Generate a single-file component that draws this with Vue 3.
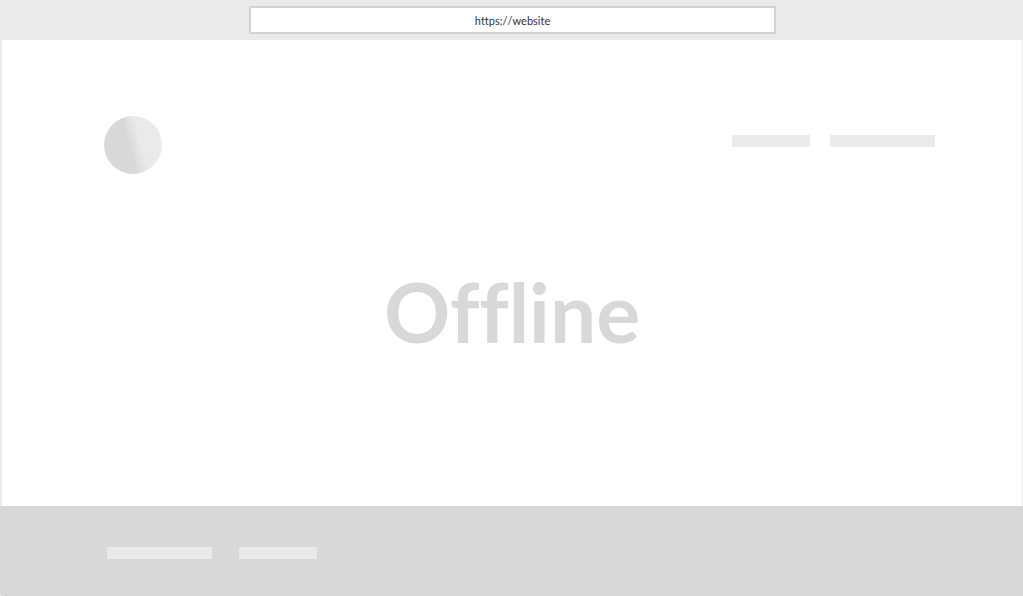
<script setup>
import { ref } from 'vue'

const address = ref('https://website')
</script>

<template>
  <div class="browser">
    <header class="toolbar">
      <input v-model="address" class="address" type="text" aria-label="Address" spellcheck="false" />
    </header>
    <main class="page">
      <div class="top">
        <div class="logo"></div>
        <div class="nav">
          <span class="bar short"></span>
          <span class="bar long"></span>
        </div>
      </div>
      <h1 class="status">Offline</h1>
    </main>
    <footer class="footer">
      <span class="bar long"></span>
      <span class="bar short"></span>
    </footer>
  </div>
</template>

<style>
body {
  margin: 0;
  background: #fff;
}
</style>

<style scoped>
.browser {
  box-sizing: border-box;
  min-height: 100vh;
  display: flex;
  flex-direction: column;
  overflow: hidden;
  border-radius: 2px 0 0 2px;
  background: #fff;
  font-family: Lato, "Liberation Sans", sans-serif;
  font-variant-ligatures: none;
}

.toolbar {
  display: flex;
  justify-content: center;
  padding: 6px 0 6px 2px;
  background: #eaeaea;
}

.address {
  box-sizing: border-box;
  width: 527px;
  max-width: 90%;
  height: 28px;
  padding: 0 8px;
  border: 2px solid #d3d3d3;
  border-radius: 0;
  outline: none;
  background: #fff;
  color: #333;
  font-family: inherit;
  font-size: 11px;
  font-kerning: none;
  font-variant-ligatures: none;
  line-height: 24px;
  text-align: center;
}

.page {
  flex: 1;
  display: flex;
  flex-direction: column;
  padding: 76px 87px 0 102px;
  border-left: 2px solid #eaeaea;
  border-right: 1px solid #eaeaea;
}

.top {
  display: flex;
  justify-content: space-between;
}

.logo {
  width: 58px;
  height: 58px;
  border-radius: 50%;
  background: linear-gradient(75deg, #d8d8d8 44%, #eaeaea 62%);
}

.nav {
  display: flex;
  gap: 20px;
  padding-top: 19px;
}

.bar {
  height: 12px;
  background: #eaeaea;
}

.short {
  width: 78px;
}

.long {
  width: 105px;
}

.status {
  margin: 87px -87px 0 -102px;
  color: #d8d8d8;
  font-size: 82px;
  font-weight: 700;
  line-height: 100px;
  text-align: center;
}

.footer {
  display: flex;
  gap: 27px;
  padding: 41px 107px 37px;
  background: #d8d8d8;
}
</style>
